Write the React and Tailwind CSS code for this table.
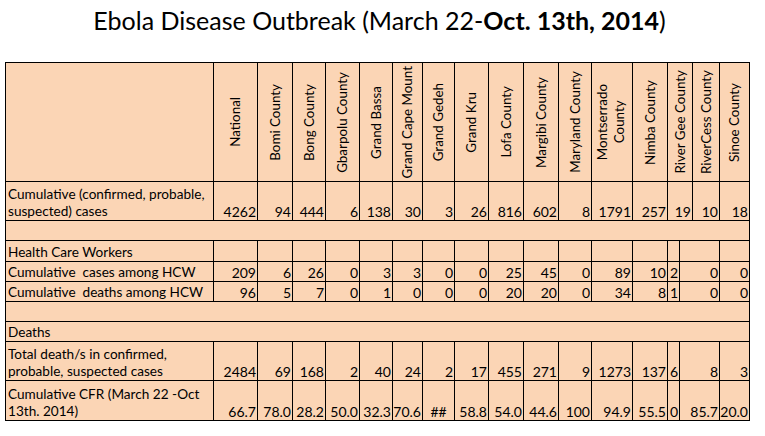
import React from 'react'

// column tracks (px): label, National ... Sinoe, with River Gee / RiverCess split in two
const COLS =
  'grid-cols-[208px_44px_35px_33px_34px_33px_30px_32px_34px_35px_35px_33px_41px_35px_12px_13px_27px_30px]'
const ROWS = 'grid-rows-[119px_39px_20px_21px_20px_20px_20px_20px_39px_40px]'

const HEADERS = [
  'National',
  'Bomi County',
  'Bong County',
  'Gbarpolu County',
  'Grand Bassa',
  'Grand Cape Mount',
  'Grand Gedeh',
  'Grand Kru',
  'Lofa County',
  'Margibi County',
  'Maryland County',
  'Montserrado County',
  'Nimba County',
  'River Gee County',
  'RiverCess County',
  'Sinoe County',
]

const cumulative = [4262, 94, 444, 6, 138, 30, 3, 26, 816, 602, 8, 1791, 257, 19, 10, 18]
const hcwCases = [209, 6, 26, 0, 3, 3, 0, 0, 25, 45, 0, 89, 10, 2, 0, 0]
const hcwDeaths = [96, 5, 7, 0, 1, 0, 0, 0, 20, 20, 0, 34, 8, 1, 0, 0]
const totalDeaths = [2484, 69, 168, 2, 40, 24, 2, 17, 455, 271, 9, 1273, 137, 6, 8, 3]
const cfr = ['66.7', '78.0', '28.2', '50.0', '32.3', '70.6', '##', '58.8', '54.0', '44.6', '100', '94.9', '55.5', '0', '85.7', '20.0']

const cell = 'border-r border-b border-black bg-[#fbd5b5] overflow-hidden'

function Label({ children, span }) {
  return (
    <div className={`${cell} flex items-end pl-[2px] whitespace-pre text-[13.6px] ${span ? 'col-span-full' : ''}`}>
      <span className="leading-[17px]">{children}</span>
    </div>
  )
}

function Num({ children, span, center }) {
  return (
    <div
      className={`${cell} flex items-end text-[14px] ${center ? 'justify-center' : 'justify-end pr-[1px]'} ${
        span ? 'col-span-2' : ''
      }`}
    >
      <span className="leading-[17px] whitespace-nowrap">{children}</span>
    </div>
  )
}

// top rows: River Gee takes two tracks; lower rows: RiverCess takes two
function DataRow({ values, label, upper }) {
  return (
    <>
      <Label>{label}</Label>
      {values.map((v, i) => (
        <Num key={i} span={(upper && i === 13) || (!upper && i === 14)} center={v === '##'}>
          {v}
        </Num>
      ))}
    </>
  )
}

export default function App() {
  return (
    <div
      className="w-[765px] h-[436px] bg-white text-black overflow-hidden"
      style={{ fontFamily: 'Lato, "Open Sans", sans-serif' }}
    >
      <div className="h-[62px] flex justify-center pt-[5px] pr-[6px]">
        <h1 className="text-[25px] leading-[30px] font-normal">
          Ebola Disease Outbreak (March 22-<b className="font-bold">Oct. 13th, 2014</b>)
        </h1>
      </div>

      <div className={`ml-[5px] w-fit grid ${COLS} ${ROWS} border-l border-t border-black`}>
        {/* header */}
        <div className={cell}></div>
        {HEADERS.map((h, i) => (
          <div
            key={h}
            className={`${cell} flex items-center justify-center text-[13.4px] ${i === 13 ? 'col-span-2' : ''}`}
          >
            <span
              className={`[writing-mode:vertical-rl] rotate-180 text-center leading-[17px] ${
                i === 11 ? 'whitespace-normal w-[36px]' : 'whitespace-nowrap'
              }`}
            >
              {i === 11 ? (
                <>
                  Montserrado
                  <br />
                  County
                </>
              ) : (
                h
              )}
            </span>
          </div>
        ))}

        <DataRow upper label={'Cumulative (confirmed, probable,\nsuspected) cases'} values={cumulative} />

        <div className={`${cell} col-span-full`}></div>

        <DataRow label="Health Care Workers" values={Array(16).fill('')} />
        <DataRow label="Cumulative  cases among HCW" values={hcwCases} />
        <DataRow label="Cumulative  deaths among HCW" values={hcwDeaths} />

        <div className={`${cell} col-span-full`}></div>

        <Label span>Deaths</Label>
        <DataRow label={'Total death/s in confirmed,\nprobable, suspected cases'} values={totalDeaths} />
        <DataRow label={'Cumulative CFR (March 22 -Oct\n13th. 2014)'} values={cfr} />
      </div>
    </div>
  )
}
